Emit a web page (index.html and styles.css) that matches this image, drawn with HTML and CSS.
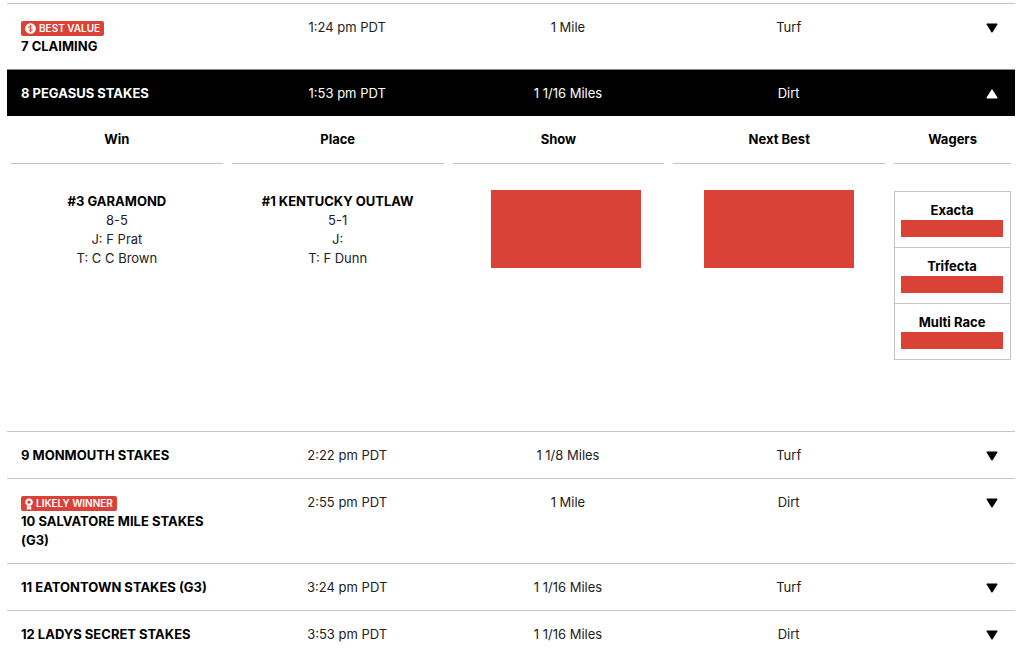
FILE: index.html
```html
<!DOCTYPE html>
<html lang="en">
<head>
<meta charset="utf-8">
<meta name="viewport" content="width=device-width, initial-scale=1">
<title>Race picks</title>
<link rel="stylesheet" href="styles.css">
</head>
<body>
<svg class="sprite" aria-hidden="true">
  <symbol id="caret" viewBox="0 0 12 10"><path d="M1.200 1.200h9.600L6 8.800z" fill="currentColor" stroke="currentColor" stroke-width="1.400" stroke-linejoin="round"/></symbol>
  <symbol id="coin" viewBox="0 0 12 12"><circle cx="6" cy="6" r="5.800" fill="#fff"/><path d="M7.900 4.500C7.700 3.700 7 3.300 6 3.300c-1.100 0-1.900.5-1.900 1.300C4.100 6.500 7.900 5.500 7.900 7.400c0 .8-.8 1.300-1.900 1.300-1.100 0-1.800-.4-2-1.200M6 2v8" fill="none" stroke="#db4237" stroke-width="1"/></symbol>
  <symbol id="award" viewBox="0 0 8 12"><circle cx="4" cy="4.200" r="2.600" fill="none" stroke="#fff" stroke-width="1.900"/><circle cx="4" cy="4.200" r="3.600" fill="none" stroke="#fff" stroke-width=".7" stroke-dasharray="1.600 .660"/><path d="M1.800 8.200h4.400V12L4 10.900 1.800 12z" fill="#fff"/></symbol>
</svg>
<main class="page">
  <table class="races">
    <colgroup><col class="col-name"><col class="col-info"><col class="col-info"><col class="col-info"><col class="col-toggle"></colgroup>
    <tbody>
      <tr class="race">
        <th scope="row"><span class="badge"><svg class="coin"><use href="#coin"/></svg>BEST VALUE</span>7 CLAIMING</th>
        <td>1:24 pm PDT</td><td>1 Mile</td><td>Turf</td>
        <td class="end"><button class="toggle" type="button" aria-label="Show race 7" aria-expanded="false"><svg><use href="#caret"/></svg></button></td>
      </tr>
      <tr class="race open">
        <th scope="row">8 PEGASUS STAKES</th>
        <td>1:53 pm PDT</td><td>1 1/16 Miles</td><td>Dirt</td>
        <td class="end"><button class="toggle" type="button" aria-label="Hide race 8" aria-expanded="true"><svg><use href="#caret"/></svg></button></td>
      </tr>
      <tr class="detail">
        <td colspan="5">
          <div class="picks">
            <section><h3>Win</h3><div class="pick"><strong>#3 GARAMOND</strong><p>8-5</p><p>J: F Prat</p><p>T: C C Brown</p></div></section>
            <section><h3>Place</h3><div class="pick"><strong>#1 KENTUCKY OUTLAW</strong><p>5-1</p><p>J:</p><p>T: F Dunn</p></div></section>
            <section><h3>Show</h3><div class="pick locked inset"><div class="cover"></div></div></section>
            <section><h3>Next Best</h3><div class="pick locked"><div class="cover"></div></div></section>
            <section><h3>Wagers</h3>
              <ul class="wagers">
                <li>Exacta<div class="bar"></div></li>
                <li>Trifecta<div class="bar"></div></li>
                <li>Multi Race<div class="bar"></div></li>
              </ul>
            </section>
          </div>
        </td>
      </tr>
      <tr class="race">
        <th scope="row">9 MONMOUTH STAKES</th>
        <td>2:22 pm PDT</td><td>1 1/8 Miles</td><td>Turf</td>
        <td class="end"><button class="toggle" type="button" aria-label="Show race 9" aria-expanded="false"><svg><use href="#caret"/></svg></button></td>
      </tr>
      <tr class="race">
        <th scope="row"><span class="badge"><svg class="award"><use href="#award"/></svg>LIKELY WINNER</span>10 SALVATORE MILE STAKES (G3)</th>
        <td>2:55 pm PDT</td><td>1 Mile</td><td>Dirt</td>
        <td class="end"><button class="toggle" type="button" aria-label="Show race 10" aria-expanded="false"><svg><use href="#caret"/></svg></button></td>
      </tr>
      <tr class="race">
        <th scope="row">11 EATONTOWN STAKES (G3)</th>
        <td>3:24 pm PDT</td><td>1 1/16 Miles</td><td>Turf</td>
        <td class="end"><button class="toggle" type="button" aria-label="Show race 11" aria-expanded="false"><svg><use href="#caret"/></svg></button></td>
      </tr>
      <tr class="race">
        <th scope="row">12 LADYS SECRET STAKES</th>
        <td>3:53 pm PDT</td><td>1 1/16 Miles</td><td>Dirt</td>
        <td class="end"><button class="toggle" type="button" aria-label="Show race 12" aria-expanded="false"><svg><use href="#caret"/></svg></button></td>
      </tr>
    </tbody>
  </table>
</main>
</body>
</html>
```
FILE: styles.css
```css
* { box-sizing: border-box; }
body { margin: 0; background: #fff; color: #222; font: 13px/19px Inter, "Liberation Sans", sans-serif; }
.sprite { position: absolute; width: 0; height: 0; }
.page { height: 100vh; overflow: hidden; padding: 3px 9px 0 7px; }
.races { width: 100%; table-layout: fixed; border-collapse: separate; border-spacing: 0; }
.col-name { width: 22.8%; }
.col-info { width: 21.9%; }
.race th, .race td { border-top: 1px solid #c4c4c4; padding: 14px 0 13px; vertical-align: top; text-align: center; }
.race th { padding-left: 14px; padding-right: 14px; text-align: left; color: #000; font-weight: 700; }
.race .end { padding-right: 17px; text-align: right; }
.race.open th, .race.open td { background: #000; color: #fff; border-top-color: #888; }
.toggle { display: inline-flex; align-items: center; height: 19px; padding: 0; border: 0; background: none; color: #000; vertical-align: top; cursor: pointer; }
.toggle svg { width: 12px; height: 10px; }
.open .toggle { color: #fff; }
.open .toggle svg { transform: rotate(180deg); }
.badge { display: flex; align-items: center; gap: 3px; width: fit-content; height: 15px; margin: 3px 0 1px; padding: 0 4px; border-radius: 2px; background: #db4237; color: #fff; font-size: 10px; line-height: 15px; font-weight: 600; }
.coin { width: 11px; height: 11px; }
.award { width: 8px; height: 12px; }
.detail td { padding: 0; }
.picks { display: grid; grid-template-columns: repeat(4, 212fr) 117fr; gap: 9px; padding: 0 4px 71px; text-align: center; }
.picks h3 { margin: 0; padding: 14px 0; border-bottom: 1px solid #c4c4c4; color: #000; font-size: 13px; line-height: 19px; font-weight: 700; }
.pick { padding-top: 28px; }
.pick strong { color: #000; }
.pick p { margin: 0; }
.locked { display: flex; justify-content: center; padding-top: 26px; }
.inset { padding-left: 15px; }
.cover { width: 150px; height: 78px; background: #db4237; }
.wagers { margin: 27px 0 0; padding: 0; list-style: none; border: 1px solid #c4c4c4; border-top: 0; color: #000; font-weight: 700; }
.wagers li { height: 56px; padding: 9px 7px 0 6px; border-top: 1px solid #c4c4c4; }
.bar { height: 17px; background: #db4237; }
```
